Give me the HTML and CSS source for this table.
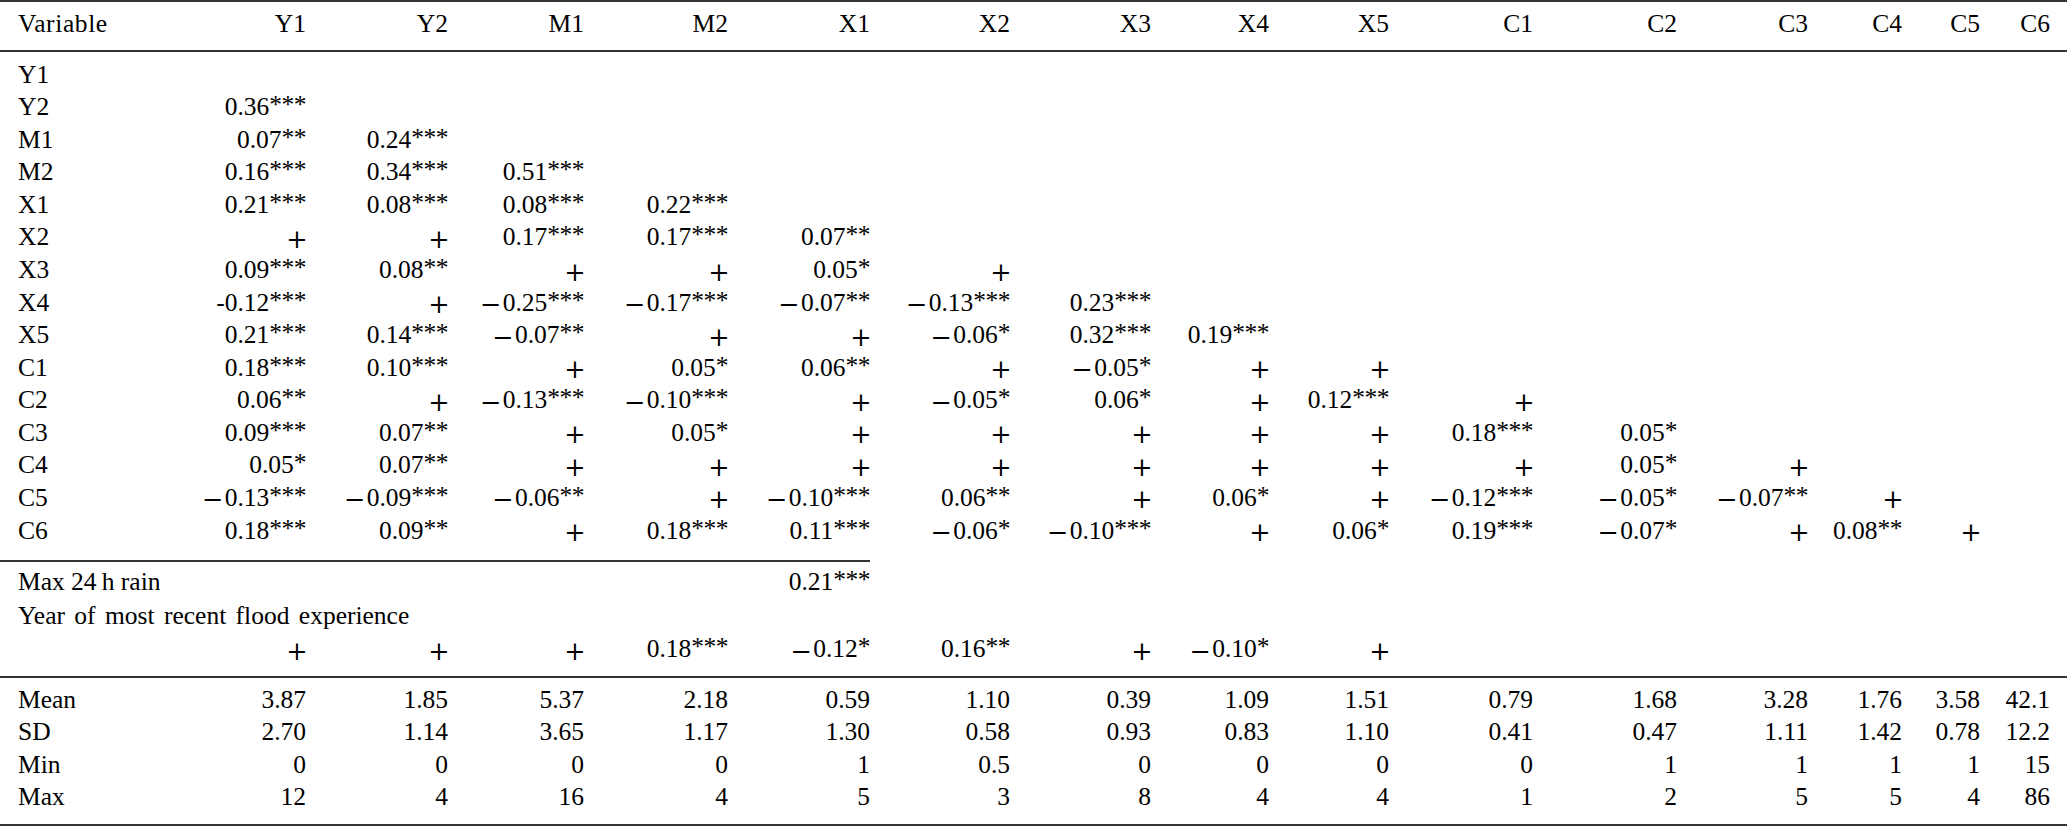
FILE: index.html
```html
<!DOCTYPE html>
<html lang="en">
<head>
<meta charset="utf-8">
<title>Correlation table</title>
<link rel="stylesheet" href="styles.css">
</head>
<body>
<table class="corr">
  <colgroup>
    <col class="c-lbl"><col class="c-y1"><col class="c-y2"><col class="c-m1"><col class="c-m2">
    <col class="c-x1"><col class="c-x2"><col class="c-x3"><col class="c-x4"><col class="c-x5">
    <col class="c-c1"><col class="c-c2"><col class="c-c3"><col class="c-c4"><col class="c-c5"><col class="c-c6">
  </colgroup>
  <thead>
    <tr>
      <th class="lbl head-lbl">Variable</th><th>Y1</th><th>Y2</th><th>M1</th><th>M2</th><th>X1</th><th>X2</th><th>X3</th><th>X4</th><th>X5</th><th>C1</th><th>C2</th><th>C3</th><th>C4</th><th>C5</th><th class="last">C6</th>
    </tr>
  </thead>
  <tbody class="s1">
    <tr><td class="lbl">Y1</td></tr>
    <tr><td class="lbl">Y2</td><td>0.36<span class="s">***</span></td></tr>
    <tr><td class="lbl">M1</td><td>0.07<span class="s">**</span></td><td>0.24<span class="s">***</span></td></tr>
    <tr><td class="lbl">M2</td><td>0.16<span class="s">***</span></td><td>0.34<span class="s">***</span></td><td>0.51<span class="s">***</span></td></tr>
    <tr><td class="lbl">X1</td><td>0.21<span class="s">***</span></td><td>0.08<span class="s">***</span></td><td>0.08<span class="s">***</span></td><td>0.22<span class="s">***</span></td></tr>
    <tr><td class="lbl">X2</td><td><span class="op">+</span></td><td><span class="op">+</span></td><td>0.17<span class="s">***</span></td><td>0.17<span class="s">***</span></td><td>0.07<span class="s">**</span></td></tr>
    <tr><td class="lbl">X3</td><td>0.09<span class="s">***</span></td><td>0.08<span class="s">**</span></td><td><span class="op">+</span></td><td><span class="op">+</span></td><td>0.05<span class="s">*</span></td><td><span class="op">+</span></td></tr>
    <tr><td class="lbl">X4</td><td>-0.12<span class="s">***</span></td><td><span class="op">+</span></td><td><span class="op mi">−</span>0.25<span class="s">***</span></td><td><span class="op mi">−</span>0.17<span class="s">***</span></td><td><span class="op mi">−</span>0.07<span class="s">**</span></td><td><span class="op mi">−</span>0.13<span class="s">***</span></td><td>0.23<span class="s">***</span></td></tr>
    <tr><td class="lbl">X5</td><td>0.21<span class="s">***</span></td><td>0.14<span class="s">***</span></td><td><span class="op mi">−</span>0.07<span class="s">**</span></td><td><span class="op">+</span></td><td><span class="op">+</span></td><td><span class="op mi">−</span>0.06<span class="s">*</span></td><td>0.32<span class="s">***</span></td><td>0.19<span class="s">***</span></td></tr>
    <tr><td class="lbl">C1</td><td>0.18<span class="s">***</span></td><td>0.10<span class="s">***</span></td><td><span class="op">+</span></td><td>0.05<span class="s">*</span></td><td>0.06<span class="s">**</span></td><td><span class="op">+</span></td><td><span class="op mi">−</span>0.05<span class="s">*</span></td><td><span class="op">+</span></td><td><span class="op">+</span></td></tr>
    <tr><td class="lbl">C2</td><td>0.06<span class="s">**</span></td><td><span class="op">+</span></td><td><span class="op mi">−</span>0.13<span class="s">***</span></td><td><span class="op mi">−</span>0.10<span class="s">***</span></td><td><span class="op">+</span></td><td><span class="op mi">−</span>0.05<span class="s">*</span></td><td>0.06<span class="s">*</span></td><td><span class="op">+</span></td><td>0.12<span class="s">***</span></td><td><span class="op">+</span></td></tr>
    <tr><td class="lbl">C3</td><td>0.09<span class="s">***</span></td><td>0.07<span class="s">**</span></td><td><span class="op">+</span></td><td>0.05<span class="s">*</span></td><td><span class="op">+</span></td><td><span class="op">+</span></td><td><span class="op">+</span></td><td><span class="op">+</span></td><td><span class="op">+</span></td><td>0.18<span class="s">***</span></td><td>0.05<span class="s">*</span></td></tr>
    <tr><td class="lbl">C4</td><td>0.05<span class="s">*</span></td><td>0.07<span class="s">**</span></td><td><span class="op">+</span></td><td><span class="op">+</span></td><td><span class="op">+</span></td><td><span class="op">+</span></td><td><span class="op">+</span></td><td><span class="op">+</span></td><td><span class="op">+</span></td><td><span class="op">+</span></td><td>0.05<span class="s">*</span></td><td><span class="op">+</span></td></tr>
    <tr><td class="lbl">C5</td><td><span class="op mi">−</span>0.13<span class="s">***</span></td><td><span class="op mi">−</span>0.09<span class="s">***</span></td><td><span class="op mi">−</span>0.06<span class="s">**</span></td><td><span class="op">+</span></td><td><span class="op mi">−</span>0.10<span class="s">***</span></td><td>0.06<span class="s">**</span></td><td><span class="op">+</span></td><td>0.06<span class="s">*</span></td><td><span class="op">+</span></td><td><span class="op mi">−</span>0.12<span class="s">***</span></td><td><span class="op mi">−</span>0.05<span class="s">*</span></td><td><span class="op mi">−</span>0.07<span class="s">**</span></td><td><span class="op">+</span></td></tr>
    <tr><td class="lbl">C6</td><td>0.18<span class="s">***</span></td><td>0.09<span class="s">**</span></td><td><span class="op">+</span></td><td>0.18<span class="s">***</span></td><td>0.11<span class="s">***</span></td><td><span class="op mi">−</span>0.06<span class="s">*</span></td><td><span class="op mi">−</span>0.10<span class="s">***</span></td><td><span class="op">+</span></td><td>0.06<span class="s">*</span></td><td>0.19<span class="s">***</span></td><td><span class="op mi">−</span>0.07<span class="s">*</span></td><td><span class="op">+</span></td><td>0.08<span class="s">**</span></td><td><span class="op">+</span></td></tr>
  </tbody>
  <tbody class="s2">
    <tr><td class="lbl">Max 24&thinsp;h rain</td><td></td><td></td><td></td><td></td><td>0.21<span class="s">***</span></td></tr>
    <tr><td class="lbl wide" colspan="16">Year of most recent flood experience</td></tr>
    <tr><td class="lbl"></td><td><span class="op">+</span></td><td><span class="op">+</span></td><td><span class="op">+</span></td><td>0.18<span class="s">***</span></td><td><span class="op mi">−</span>0.12<span class="s">*</span></td><td>0.16<span class="s">**</span></td><td><span class="op">+</span></td><td><span class="op mi">−</span>0.10<span class="s">*</span></td><td><span class="op">+</span></td></tr>
  </tbody>
  <tbody class="s3">
    <tr><td class="lbl">Mean</td><td>3.87</td><td>1.85</td><td>5.37</td><td>2.18</td><td>0.59</td><td>1.10</td><td>0.39</td><td>1.09</td><td>1.51</td><td>0.79</td><td>1.68</td><td>3.28</td><td>1.76</td><td>3.58</td><td class="last">42.1</td></tr>
    <tr><td class="lbl">SD</td><td>2.70</td><td>1.14</td><td>3.65</td><td>1.17</td><td>1.30</td><td>0.58</td><td>0.93</td><td>0.83</td><td>1.10</td><td>0.41</td><td>0.47</td><td>1.11</td><td>1.42</td><td>0.78</td><td class="last">12.2</td></tr>
    <tr><td class="lbl">Min</td><td>0</td><td>0</td><td>0</td><td>0</td><td>1</td><td>0.5</td><td>0</td><td>0</td><td>0</td><td>0</td><td>1</td><td>1</td><td>1</td><td>1</td><td class="last">15</td></tr>
    <tr><td class="lbl">Max</td><td>12</td><td>4</td><td>16</td><td>4</td><td>5</td><td>3</td><td>8</td><td>4</td><td>4</td><td>1</td><td>2</td><td>5</td><td>5</td><td>4</td><td class="last">86</td></tr>
  </tbody>
</table>
</body>
</html>
```

FILE: styles.css
```css
html, body {
  margin: 0;
  padding: 0;
  background: #ffffff;
}

body {
  color: #000000;
  font-family: "Liberation Serif", "Times New Roman", serif;
  font-size: 25.5px;
}

.corr {
  width: 2067px;
  table-layout: fixed;
  border-collapse: separate;
  border-spacing: 0;
  border-top: 2px solid #333333;
  border-bottom: 2px solid #333333;
}

.c-lbl { width: 200px; }
.c-y1 { width: 106px; }
.c-y2 { width: 142px; }
.c-m1 { width: 136px; }
.c-m2 { width: 144px; }
.c-x1 { width: 142px; }
.c-x2 { width: 140px; }
.c-x3 { width: 141px; }
.c-x4 { width: 118px; }
.c-x5 { width: 120px; }
.c-c1 { width: 144px; }
.c-c2 { width: 144px; }
.c-c3 { width: 131px; }
.c-c4 { width: 94px; }
.c-c5 { width: 78px; }
.c-c6 { width: 87px; }

.corr th,
.corr td {
  padding: 0;
  line-height: 32.57px;
  text-align: right;
  white-space: nowrap;
  font-weight: normal;
  vertical-align: baseline;
}

.corr .lbl {
  text-align: left;
  padding-left: 18px;
}

.corr .head-lbl {
  letter-spacing: 0.6px;
}

.corr .wide {
  word-spacing: 3px;
}

.corr .last {
  padding-right: 17px;
}

.corr thead th {
  padding-top: 6.2px;
  padding-bottom: 9.2px;
  border-bottom: 2px solid #333333;
}

.s1 tr:first-child td { padding-top: 6.7px; }
.s1 tr:last-child td { padding-bottom: 12.7px; }

.s2 td { line-height: 33.5px; }
.s2 tr:first-child td {
  border-top: 2px solid #333333;
  padding-top: 3.25px;
}
.s2 tr:last-child td { padding-bottom: 10.25px; }

.s3 td { line-height: 32.2px; }
.s3 tr:first-child td {
  border-top: 2px solid #333333;
  padding-top: 6.4px;
}
.s3 tr:last-child td { padding-bottom: 10.8px; }

.s {
  line-height: 0;
  vertical-align: 0.09em;
  letter-spacing: -0.02em;
}

.op {
  font-family: "DejaVu Serif", "Liberation Serif", serif;
  line-height: 0;
  vertical-align: -0.1em;
  margin-right: -1.5px;
}

.op.mi {
  margin-right: 1.5px;
}
```
